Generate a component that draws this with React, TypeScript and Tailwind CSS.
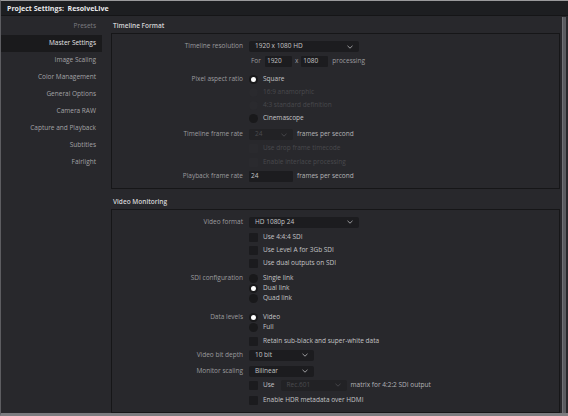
import React from "react";

function Chevron({ dim }: { dim?: boolean }) {
  return (
    <svg width="6" height="4" viewBox="0 0 6 4" className="shrink-0">
      <path d="M0.5 0.8 L3 3.2 L5.5 0.8" fill="none" stroke={dim ? "#4a4a4e" : "#a9a9ad"} strokeWidth="0.9" />
    </svg>
  );
}

function Dropdown({ text, w, dim }: { text: string; w: string; dim?: boolean }) {
  return (
    <div
      className={`${w} h-[11px] rounded-[2px] flex items-center justify-between pl-[6px] pr-[6px] ${
        dim ? "bg-[#222225] text-[#4b4b4f]" : "bg-[#1c1c1f] text-[#c4c4c6]"
      }`}
    >
      <span>{text}</span>
      <Chevron dim={dim} />
    </div>
  );
}

function Input({ text, w }: { text: string; w: string }) {
  return (
    <div className={`${w} h-[11px] rounded-[1px] bg-[#1c1c1f] flex items-center pl-[2px] text-[#c4c4c6]`}>
      {text}
    </div>
  );
}

function Radio({ on, dim, label }: { on?: boolean; dim?: boolean; label: string }) {
  return (
    <div className="flex items-center">
      <span
        className={`w-[9px] h-[9px] rounded-full flex items-center justify-center ${
          dim ? "bg-[#2a2a2e]" : "bg-[#19191b]"
        }`}
      >
        {on && <span className="w-[5px] h-[5px] rounded-full bg-white" />}
      </span>
      <span className={`ml-[5px] ${dim ? "text-[#48484c]" : "text-[#c4c4c6]"}`}>{label}</span>
    </div>
  );
}

function Check({ dim, label }: { dim?: boolean; label: string }) {
  return (
    <div className="flex items-center">
      <span className={`w-[9px] h-[9px] rounded-[1px] ${dim ? "bg-[#2a2a2e]" : "bg-[#1b1b1e]"}`} />
      <span className={`ml-[5px] ${dim ? "text-[#48484c]" : "text-[#c4c4c6]"}`}>{label}</span>
    </div>
  );
}

function Row({
  label,
  cls,
  children,
}: {
  label?: string;
  cls: string;
  children: React.ReactNode;
}) {
  return (
    <div className={`flex items-center ${cls}`}>
      <div className="w-[131px] text-right text-[#9c9c9f] whitespace-nowrap">{label ?? ""}</div>
      <div className="ml-[6px] flex items-center whitespace-nowrap">{children}</div>
    </div>
  );
}

const sideItems = [
  "Master Settings",
  "Image Scaling",
  "Color Management",
  "General Options",
  "Camera RAW",
  "Capture and Playback",
  "Subtitles",
  "Fairlight",
];

export default function App() {
  return (
    <div className="w-[568px] h-[416px] overflow-hidden bg-[#28282c] border-t border-l border-b-[3px] border-t-[#9a9a9c] border-l-[#5d5d61] border-b-[#7c7c80] flex flex-col font-['Open_Sans',sans-serif] text-[6.5px] leading-none">
      <div className="h-[15px] shrink-0 bg-[#1d1e21] border-b border-[#151517] flex items-center pl-[6px] pt-[1px] text-[7px] font-bold text-[#e8e8ea] whitespace-pre">
        {"Project Settings:  ResolveLive"}
      </div>
      <div className="flex flex-1 min-h-0">
        <div className="w-[101px] shrink-0 pt-[2px]">
          <div className="h-[17px] flex items-center justify-end pr-[6px] text-[#7d7d81]">Presets</div>
          {sideItems.map((s, i) => (
            <div
              key={s}
              className={`h-[17px] flex items-center justify-end pr-[6px] ${
                i === 0 ? "bg-[#1a1a1c] text-[#e4e4e6]" : "text-[#a3a3a6]"
              }`}
            >
              {s}
            </div>
          ))}
        </div>
        <div className="flex-1 pl-[9px] pt-[1px] flex flex-col">
          <div className="h-[16px] pt-[2px] flex items-center pl-[2px] text-[#d4d4d6] font-semibold">Timeline Format</div>
          <div className="border border-[#161618] pt-[7px] pb-[4px]">
            <Row label="Timeline resolution" cls="h-[12px]">
              <Dropdown text="1920 x 1080 HD" w="w-[110px]" />
            </Row>
            <Row cls="h-[12px] mt-[3px]">
              <span className="text-[#9c9c9f] ml-[2px] mr-[4px]">For</span>
              <Input text="1920" w="w-[27px]" />
              <span className="text-[#9c9c9f] mx-[3px]">x</span>
              <Input text="1080" w="w-[27px]" />
              <span className="text-[#9c9c9f] ml-[4px]">processing</span>
            </Row>
            <div className="mt-[5px]">
              <Row label="Pixel aspect ratio" cls="h-[13px]">
                <Radio on label="Square" />
              </Row>
              <Row cls="h-[13px]">
                <Radio dim label="16:9 anamorphic" />
              </Row>
              <Row cls="h-[13px]">
                <Radio dim label="4:3 standard definition" />
              </Row>
              <Row cls="h-[13px]">
                <Radio label="Cinemascope" />
              </Row>
            </div>
            <div className="mt-[3px]">
              <Row label="Timeline frame rate" cls="h-[14px]">
                <Dropdown text="24" w="w-[44px]" dim />
                <span className="ml-[4px] text-[#b4b4b7]">frames per second</span>
              </Row>
              <Row cls="h-[14px]">
                <Check dim label="Use drop frame timecode" />
              </Row>
              <Row cls="h-[14px]">
                <Check dim label="Enable interlace processing" />
              </Row>
              <Row label="Playback frame rate" cls="h-[14px]">
                <Input text="24" w="w-[44px]" />
                <span className="ml-[4px] text-[#b4b4b7]">frames per second</span>
              </Row>
            </div>
          </div>

          <div className="h-[16px] mt-[5px] pt-[1px] flex items-center pl-[2px] text-[#d4d4d6] font-semibold">Video Monitoring</div>
          <div className="border border-[#161618] pt-[6px] pb-[6px]">
            <Row label="Video format" cls="h-[12px]">
              <Dropdown text="HD 1080p 24" w="w-[110px]" />
            </Row>
            <div className="mt-[3px]">
              <Row cls="h-[13px]">
                <Check label="Use 4:4:4 SDI" />
              </Row>
              <Row cls="h-[13px]">
                <Check label="Use Level A for 3Gb SDI" />
              </Row>
              <Row cls="h-[13px]">
                <Check label="Use dual outputs on SDI" />
              </Row>
            </div>
            <div className="mt-[3px]">
              <Row label="SDI configuration" cls="h-[10px]">
                <Radio label="Single link" />
              </Row>
              <Row cls="h-[10px]">
                <Radio on label="Dual link" />
              </Row>
              <Row cls="h-[10px]">
                <Radio label="Quad link" />
              </Row>
            </div>
            <div className="mt-[9px]">
              <Row label="Data levels" cls="h-[10px]">
                <Radio on label="Video" />
              </Row>
              <Row cls="h-[10px]">
                <Radio label="Full" />
              </Row>
            </div>
            <Row cls="h-[12px] mt-[3px]">
              <Check label="Retain sub-black and super-white data" />
            </Row>
            <Row label="Video bit depth" cls="h-[12px] mt-[2px]">
              <Dropdown text="10 bit" w="w-[65px]" />
            </Row>
            <Row label="Monitor scaling" cls="h-[12px] mt-[4px]">
              <Dropdown text="Bilinear" w="w-[65px]" />
            </Row>
            <Row cls="h-[12px] mt-[2px]">
              <Check label="Use" />
              <span className="ml-[6px]">
                <Dropdown text="Rec.601" w="w-[66px]" dim />
              </span>
              <span className="ml-[4px] text-[#b4b4b7]">matrix for 4:2:2 SDI output</span>
            </Row>
            <Row cls="h-[12px] mt-[3px]">
              <Check label="Enable HDR metadata over HDMI" />
            </Row>
          </div>
        </div>
        <div className="w-[8px] shrink-0 pt-[1px] pl-[2px] pr-[2px]">
          <div className="h-full bg-[#5a5b60] border-l border-[#707176]" />
        </div>
      </div>
    </div>
  );
}
